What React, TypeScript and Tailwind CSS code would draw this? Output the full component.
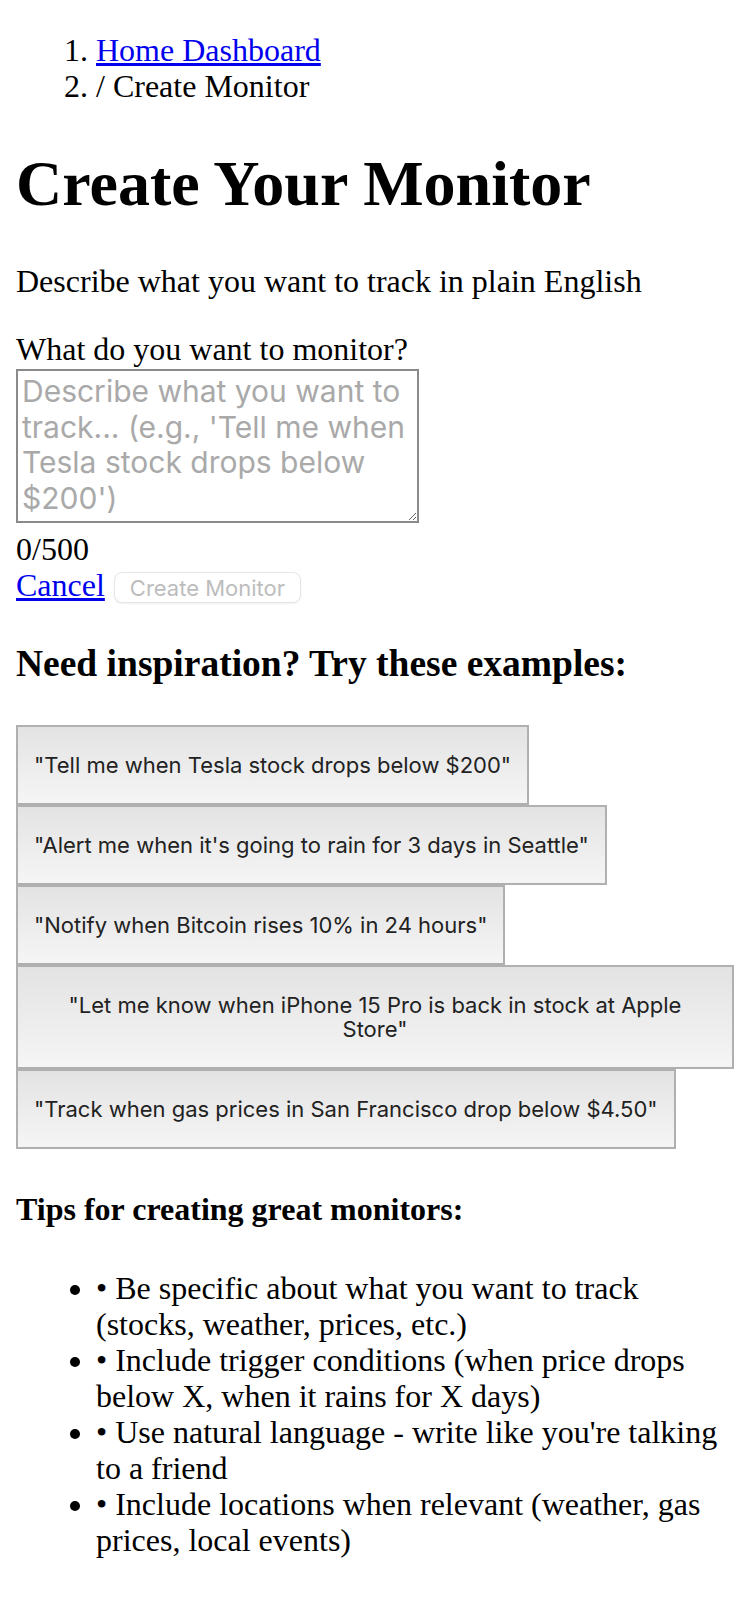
import { useState } from "react";

const EXAMPLES = [
  "\"Tell me when Tesla stock drops below $200\"",
  "\"Alert me when it's going to rain for 3 days in Seattle\"",
  "\"Notify when Bitcoin rises 10% in 24 hours\"",
  "\"Let me know when iPhone 15 Pro is back in stock at Apple Store\"",
  "\"Track when gas prices in San Francisco drop below $4.50\"",
];

const TIPS = [
  "• Be specific about what you want to track (stocks, weather, prices, etc.)",
  "• Include trigger conditions (when price drops below X, when it rains for X days)",
  "• Use natural language - write like you're talking to a friend",
  "• Include locations when relevant (weather, gas prices, local events)",
];

export default function App() {
  const [text, setText] = useState("");

  return (
    <div className="min-h-[1624px] bg-white px-4 pt-[32px] font-['Liberation_Serif','Times_New_Roman',serif] text-[32px] leading-[36px] text-black">
      {/* breadcrumb */}
      <ol className="list-decimal pl-[80px]">
        <li>
          <a href="#" className="text-[#0000ee] underline">
            Home Dashboard
          </a>
        </li>
        <li>/ Create Monitor</li>
      </ol>

      <h1 className="mt-[44px] text-[64px] leading-[72px] font-bold">Create Your Monitor</h1>
      <p className="mt-[43px]">Describe what you want to track in plain English</p>

      <div className="mt-[32px]">
        <label htmlFor="monitor" className="block">
          What do you want to monitor?
        </label>
        <textarea
          id="monitor"
          rows={4}
          value={text}
          maxLength={500}
          onChange={(e) => setText(e.target.value)}
          placeholder="Describe what you want to track... (e.g., 'Tell me when Tesla stock drops below $200')"
          className="mt-[2px] block h-[154px] w-[403px] border-2 border-[#8a8a8a] px-[4px] pt-[3px] font-['Inter','Noto_Sans',sans-serif] text-[30px] leading-[35.5px] text-black placeholder:text-[#a9a9a9]"
        />
        <div className="mt-[8px]">{text.length}/500</div>
        <div className="flex items-start gap-[9px]">
          <a href="#" className="text-[#0000ee] underline">
            Cancel
          </a>
          <button
            disabled
            className="mt-[5px] h-[31px] rounded-[8px] border border-[#e6e6e6] bg-white px-[15px] font-['Inter','Noto_Sans',sans-serif] text-[22px] leading-[26px] text-[#bdbdbd] shadow-[0_1px_2px_rgba(0,0,0,0.06)]"
          >
            Create Monitor
          </button>
        </div>
      </div>

      <h3 className="mt-[39px] text-[37.5px] leading-[43px] font-bold">Need inspiration? Try these examples:</h3>

      <div className="mt-[40px]">
        {EXAMPLES.map((ex) => (
          <button
            key={ex}
            className="block w-fit max-w-full border-2 border-[#b0b0b0] bg-gradient-to-b from-[#e3e3e3] to-[#f5f5f5] px-[16px] py-[26px] text-center font-['Inter','Noto_Sans',sans-serif] text-[22px] leading-[24px] text-[#222]"
          >
            {ex}
          </button>
        ))}
      </div>

      <h4 className="mt-[42px] font-bold">Tips for creating great monitors:</h4>
      <ul className="mt-[43px] list-disc pl-[80px] pb-[40px]">
        {TIPS.map((t) => (
          <li key={t}>{t}</li>
        ))}
      </ul>
    </div>
  );
}
